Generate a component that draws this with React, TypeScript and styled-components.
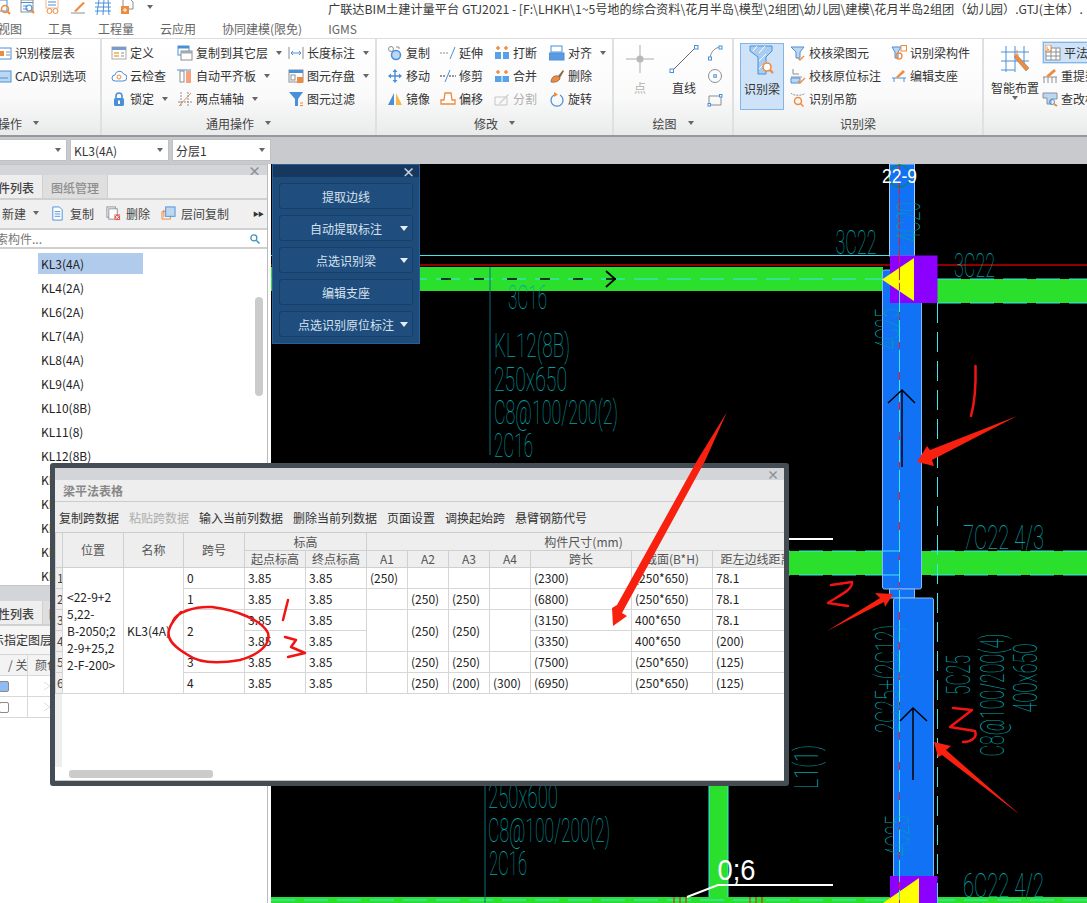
import React from 'react';
import styled, { createGlobalStyle } from 'styled-components';

const Global = createGlobalStyle`
  html, body { margin: 0; padding: 0; background: #c9cacd; }
  * { box-sizing: border-box; }
`;

const FONT = `"Noto Sans CJK SC", "Open Sans", sans-serif`;
const B = '#4a90d9';
const LB = '#bcd7f2';
const O = '#f08a3c';
const G = '#8a8f96';

const Page = styled.div`
  position: relative; width: 1087px; height: 903px; overflow: hidden;
  background: #c9cacd; font: 12px/17px ${FONT}; color: #333;
`;
const TitleRow = styled.div`
  display: flex; align-items: flex-start; height: 20px; background: #fff; overflow: hidden; white-space: nowrap;
`;
const Quick = styled.div`
  display: flex; align-items: center; gap: 9px; width: 333px; flex: none; margin-left: -5px; height: 16px; margin-top: -1px;
`;
const Title = styled.div`font-size: 12.2px; line-height: 18px; color: #3a3a3a;`;
const MenuRow = styled.div`
  display: flex; gap: 26px; height: 18px; background: #fff; margin-left: -2px; color: #666; line-height: 18px; white-space: nowrap;
`;
const Ribbon = styled.div`
  display: flex; height: 99px; background: linear-gradient(#fff 0, #fafafa 60%, #e9eaea 100%);
  border-top: 1px solid #dcdcdc; border-bottom: 2px solid #97989b; overflow: hidden;
`;
const Group = styled.div<{ $w: number }>`
  width: ${p => p.$w}px; flex: none; display: flex; flex-direction: column;
  border-right: 2px solid #dfe0e1; margin: 0;
`;
const GroupBody = styled.div<{ $pl: number }>`
  height: 73px; display: flex; padding: 2px 0 0 ${p => p.$pl}px;
`;
const GroupLabel = styled.div<{ $left?: boolean }>`
  height: 22px; display: flex; align-items: center; gap: 6px; color: #444; white-space: nowrap;
  justify-content: ${p => (p.$left ? 'flex-start' : 'center')};
  margin-left: ${p => (p.$left ? '-2px' : '0')};
`;
const Column = styled.div<{ $w?: number; $ml?: number }>`
  display: flex; flex-direction: column; flex: none; width: ${p => (p.$w ? `${p.$w}px` : 'auto')};
  margin-left: ${p => p.$ml ?? 0}px;
`;
const Tool = styled.div<{ $off?: boolean; $on?: boolean }>`
  display: flex; align-items: center; gap: 3px; height: 23px; white-space: nowrap;
  color: ${p => (p.$off ? '#b0b0b0' : '#333')};
  background: ${p => (p.$on ? '#cfe3f8' : 'none')};
  outline: ${p => (p.$on ? '1px solid #86b4e4' : 'none')};
  outline-offset: -2px; padding-left: ${p => (p.$on ? 3 : 0)}px;
`;
const IconBox = styled.span`
  width: 16px; height: 16px; flex: none; display: flex; align-items: center; justify-content: center;
`;
const Caret = styled.span<{ $c?: string; $ml?: number }>`
  width: 0; height: 0; flex: none; margin-left: ${p => p.$ml ?? 5}px;
  border-left: 3.5px solid transparent; border-right: 3.5px solid transparent; border-top: 4px solid ${p => p.$c ?? '#666'};
`;
const BigTool = styled.div<{ $w: number; $off?: boolean; $on?: boolean }>`
  width: ${p => p.$w}px; height: 67px; flex: none; display: flex; flex-direction: column; align-items: center;
  padding-top: ${p => (p.$on ? 1 : 3)}px; color: ${p => (p.$off ? '#b4b4b4' : '#333')};
  background: ${p => (p.$on ? '#cfe3f8' : 'none')}; border: ${p => (p.$on ? '1px solid #86b4e4' : 'none')};
  margin-top: ${p => (p.$on ? '2px' : '0')}; white-space: nowrap;
`;
const BigLabel = styled.span`margin-top: 5px;`;
const ComboBar = styled.div`
  display: flex; gap: 3px; height: 27px; padding-top: 2px; background: #c9cacd; margin-left: -20px;
`;
const Combo = styled.div<{ $w: number }>`
  width: ${p => p.$w}px; height: 22px; background: #fff; border: 1px solid #c0c1c4; display: flex; align-items: center;
  justify-content: space-between; padding: 0 5px 0 3px; color: #333;
`;
const Main = styled.div`display: flex; height: 739px; background: #000;`;
const Side = styled.div`
  width: 268px; flex: none; display: flex; flex-direction: column; background: #fff; border-right: 1px solid #bbb; overflow: hidden;
`;
const Gap = styled.div`width: 3px; flex: none; background: #fff;`;
const CanvasWrap = styled.div`flex: 1; position: relative; background: #000;`;
const Canvas = styled.svg`display: block; width: 816px; height: 739px;`;
const PanelHead = styled.div<{ $h: number }>`
  height: ${p => p.$h}px; flex: none; background: #d4d5d8; display: flex; align-items: center; justify-content: flex-end;
  padding-right: 6px; color: #8a8f96; font-weight: 700; font-size: 13px; border-top: 1px solid #c3c4c7;
`;
const TabBar = styled.div`display: flex; height: 25px; flex: none; background: #f0f0f0; border-bottom: 2px solid #d0d0d0;`;
const TabOn = styled.div`
  width: 43px; display: flex; justify-content: flex-end; align-items: center; overflow: hidden; background: #eee; color: #444;
  font-weight: 500; font-size: 12px; white-space: nowrap; border-right: 1px solid #d0d0d0; padding: 2px 8px 0 0;
`;
const TabOff = styled.div<{ $w?: number }>`
  width: ${p => p.$w ?? 65}px; display: flex; justify-content: center; align-items: center; background: #dfdfdf; color: #8e8e8e;
  font-weight: 500; border-right: 1px solid #cfcfcf; white-space: nowrap; padding-top: 2px;
`;
const SideBar = styled.div`
  height: 30px; flex: none; background: #f0f0f0; display: flex; align-items: center; padding: 0 0 2px 2px; border-bottom: 2px solid #d0d0d0; white-space: nowrap;
`;
const SideItem = styled.span<{ $ml?: number }>`
  display: flex; align-items: center; gap: 5px; margin-left: ${p => p.$ml ?? 0}px; color: #444;
`;
const More = styled.span`margin-left: auto; margin-right: 4px; font-size: 6px; color: #333; letter-spacing: -1px;`;
const Search = styled.div`
  height: 19px; flex: none; display: flex; align-items: center; justify-content: space-between; padding-right: 6px;
  border-bottom: 2px solid #d0d0d0; color: #777;
`;
const SearchText = styled.span`margin-left: -16px;`;
const List = styled.div`position: relative; height: 336px; flex: none; padding-top: 4px; overflow: hidden;`;
const ListRow = styled.div<{ $on?: boolean }>`
  width: 105px; height: 21px; margin: 0 0 3px 38px; padding-left: 3px; line-height: 21px; color: #222;
  background: ${p => (p.$on ? '#b1cbec' : 'none')};
`;
const Thumb = styled.div`position: absolute; left: 255px; top: 48px; width: 8px; height: 99px; background: #cbcbcb; border-radius: 4px;`;
const LayerNote = styled.div`
  height: 29px; flex: none; padding-left: 0; line-height: 28px; margin-left: -20px; background: #f5f5f5; border-bottom: 1px solid #d5d5d5; white-space: nowrap;
`;
const LayerRow = styled.div<{ $head?: boolean }>`
  display: grid; grid-template-columns: 28px 40px; height: 21px; flex: none; border-bottom: 1px solid #d8d8d8;
  background: ${p => (p.$head ? '#f3f3f3' : '#fff')}; line-height: 20px; color: #555;
`;
const LayerCell = styled.div`border-right: 1px solid #d8d8d8; display: flex; align-items: center; padding-left: 0; height: 20px;`;
const LayerHead = styled.div`padding-left: 8px; white-space: nowrap; border-right: 1px solid #d8d8d8;`;
const LayerColor = styled.div`padding-left: 7px; white-space: nowrap;`;
const Check = styled.span<{ $on?: boolean }>`
  width: 10px; height: 11px; margin-left: -1px; border: 1px solid #8a8a8a; border-radius: 2px; background: ${p => (p.$on ? '#8fbdf3' : '#fff')};
`;
const Tri = styled.span`
  margin-left: 16px; width: 0; height: 0; border-left: 6px solid #fff; position: relative;
  border-top: 4px solid transparent; border-bottom: 4px solid transparent; filter: drop-shadow(0 0 .6px #666);
`;

const FloatPanel = styled.div`
  position: absolute; left: 1px; top: 0; width: 148px; height: 180px; background: #1d4b7a; border: 1px solid #2a5f96;
  display: flex; flex-direction: column; gap: 6px; z-index: 2;
`;
const FloatHead = styled.div`
  height: 12px; background: #16385f; display: flex; justify-content: flex-end; align-items: center; color: #c6d3e0; font-size: 13px;
  font-weight: 700; padding-right: 4px;
`;
const FloatBtn = styled.div`
  position: relative; margin: 0 6px; height: 26px; background: #1f4e7e; border: 1px solid #173e66; border-radius: 3px;
  display: flex; align-items: center; justify-content: center; color: #d7e2ee; white-space: nowrap;
`;
const FloatCaret = styled(Caret)`position: absolute; right: 4px; top: 10px; margin: 0; border-left-width: 4px; border-right-width: 4px; border-top-width: 5px;`;

const Dialog = styled.div`
  position: absolute; left: 50px; top: 463px; width: 739px; height: 323px; border: 5px solid #454d54; border-radius: 3px;
  background: #fff; display: flex; flex-direction: column; z-index: 3; overflow: hidden;
`;
const DlgHead = styled.div`
  height: 12px; flex: none; background: #d4d5d8; display: flex; justify-content: flex-end; align-items: center; padding-right: 5px;
  color: #8a8f96; font-weight: 700; font-size: 12px;
`;
const DlgCaption = styled.div`
  height: 22px; flex: none; background: #eee; border-bottom: 1px solid #ccc; padding-left: 8px; line-height: 22px; color: #888; font-weight: 700;
`;
const DlgBar = styled.div`
  height: 31px; flex: none; display: flex; align-items: center; gap: 10px; padding-left: 4px; background: #eee; border-bottom: 1px solid #ccc;
`;
const DlgBtn = styled.span<{ $off?: boolean }>`color: ${p => (p.$off ? '#adadad' : '#333')}; white-space: nowrap;`;
const TableWrap = styled.div`flex: none; overflow: hidden; height: 161px;`;
const Table = styled.table`
  border-collapse: collapse; table-layout: fixed; width: 745px; font-size: 12px; line-height: 15px;
`;
const Th = styled.th`
  height: 17px; padding: 0; background: #eee; border: 1px solid #cfcfcf; font-weight: 400; color: #555;
  white-space: nowrap; overflow: hidden; text-align: center; border-top: 0; line-height: 15px;
`;
const Td = styled.td`
  height: 21px; padding: 0 0 0 3px; border: 1px solid #d6d6d6; color: #222; white-space: nowrap; overflow: hidden;
`;
const Idx = styled.td`
  height: 21px; padding: 0 0 0 1px; background: #eee; border: 1px solid #cfcfcf; color: #444; overflow: hidden;
`;
const Pos = styled(Td)`white-space: nowrap; padding-left: 4px; line-height: 17px;`;
const DlgFill = styled.div`flex: 1; display: flex;`;
const Strip = styled.div`width: 7px; background: #eee;`;
const DlgScroll = styled.div`height: 14px; flex: none; padding: 3px 0 0 14px; border-bottom: 1px solid #c8c8c8;`;
const DlgThumb = styled.div`width: 144px; height: 8px; border-radius: 3px; background: #cbcbcb;`;
const Marks = styled.svg`position: absolute; left: 0; top: 0; width: 1087px; height: 903px; z-index: 4; pointer-events: none;`;
const CadLabel = styled.text`
  font-family: Roboto, "Liberation Sans", sans-serif; font-weight: 100; font-size: 33px; fill: #00a0a6;
`;
const WhiteLabel = styled.text`font-family: "Liberation Sans", sans-serif; fill: #fff;`;

const Ic = ({ s = 16, children }: { s?: number; children: React.ReactNode }) => (
  <svg width={s} height={s} viewBox="0 0 16 16" fill="none">{children}</svg>
);

const icons: Record<string, React.ReactNode> = {
  floor: <><rect x="1" y="3" width="14" height="11" fill="#fff" stroke={B} /><rect x="3" y="6" width="5" height="5" fill={O} /><path d="M10 7h4M10 10h4" stroke={G} /></>,
  cad: <><rect x="1" y="3" width="14" height="11" fill={LB} stroke={B} /><path d="M4 10h8" stroke={B} /></>,
  define: <><rect x="1" y="2" width="14" height="12" fill="#fff" stroke="#aaa" /><rect x="1" y="2" width="14" height="3" fill="#7a9ccc" /><rect x="3" y="7" width="5" height="2" fill="#f3c27a" /><rect x="3" y="10" width="5" height="2" fill="#f3c27a" /><path d="M10 8h3M10 11h3" stroke={G} /></>,
  cloud: <><path d="M4 13a3 3 0 0 1 0-6 4.5 4.5 0 0 1 8.6-1A3.5 3.5 0 0 1 12 13Z" fill="#fff" stroke={B} /><circle cx="8" cy="9" r="2" stroke={O} /></>,
  lock: <><path d="M5 7V5a3 3 0 0 1 6 0v2" stroke={B} strokeWidth="1.6" /><rect x="3" y="7" width="10" height="8" rx="1.5" fill={B} /><rect x="7" y="9.5" width="2" height="3.5" fill="#fff" /></>,
  copyLayer: <><rect x="1" y="1" width="11" height="9" fill="#fff" stroke={B} /><rect x="1" y="1" width="11" height="2.5" fill={B} /><rect x="4" y="6" width="11" height="9" fill="#fff" stroke={G} /><rect x="4" y="6" width="11" height="2.5" fill="#a5a9ad" /></>,
  alignBar: <><path d="M0 2h14" stroke={B} /><rect x="3" y="3" width="4" height="11" fill="#fff" stroke={G} /><rect x="9" y="3" width="5" height="12" fill="#f6a27a" /></>,
  twoPt: <><path d="M1 11h14M4 1v14" stroke={G} strokeDasharray="2 1" /><path d="M2 15 14 2" stroke={O} /><path d="M11 1v14" stroke={G} strokeDasharray="2 1" /></>,
  dim: <><path d="M1 2v12M15 2v12" stroke={G} /><path d="M3 8h10M3 8l2-2M3 8l2 2M13 8l-2-2M13 8l-2 2" stroke={B} /></>,
  save: <><rect x="1" y="2" width="14" height="12" fill="#fff" stroke={G} /><rect x="1" y="2" width="14" height="3" fill={B} /><rect x="3" y="7" width="4" height="5" stroke={G} /><rect x="9" y="9" width="6" height="6" fill={O} /></>,
  filter: <><path d="M1 1h14L10 8v7H7V8Z" fill={B} /><path d="M12 12h3M12 14.500h3" stroke={O} /></>,
  copy: <><circle cx="4" cy="4" r="2.500" stroke={G} /><circle cx="9" cy="10" r="4.500" fill={LB} stroke={B} strokeWidth="1.5" /><path d="M9 2h3v2" stroke={G} /></>,
  move: <path d="M8 1 5.500 4h5ZM8 15l-2.500-3h5ZM1 8l3-2.500v5ZM15 8l-3-2.500v5ZM4 7.300h8v1.400H4ZM7.300 4h1.400v8H7.300Z" fill={B} />,
  mirror: <><path d="M7 2v12H1Z" fill={B} /><path d="M9 2v12h6Z" fill="#f5b94a" /></>,
  extend: <><path d="M0 8h9" stroke={G} strokeDasharray="2 1" /><path d="M10 14 15 2" stroke={B} /></>,
  trim: <><path d="M5 14 10 2" stroke={B} /><path d="M0 8h5M9 8h7" stroke="#333" strokeDasharray="2 1" /></>,
  offset: <path d="M1 13V9h3l1-7h6l1 7h3v4Z" fill="#fff" stroke={O} strokeWidth="1.300" />,
  cut: <><rect x="1" y="7" width="6" height="7" fill="#5aa2e6" /><rect x="9" y="7" width="6" height="7" fill="#5aa2e6" /><path d="M4 1v4M2 3h4M12 1v4M10 3h4" stroke={O} strokeWidth="1.500" /></>,
  merge: <><rect x="1" y="8" width="14" height="6" fill="#5aa2e6" /><path d="M8 8v6" stroke="#fff" /><path d="M4 2v4M2 4h4M12 2v4M10 4h4" stroke={O} strokeWidth="1.500" /></>,
  split: <><path d="M1 6h12v8H1Z" stroke="#c6c6c6" /><path d="M5 12 14 3l1 1-9 9Z" fill="#d0d0d0" /></>,
  alignObj: <><rect x="2" y="1" width="11" height="6" fill="#fff" stroke={B} /><rect x="0" y="8" width="15" height="7" fill="#5a9be0" stroke={B} /></>,
  del: <><path d="M9 8 14 2l1 1-4 7Z" fill="#8a6a3a" /><path d="M2 14c0-4 3-7 7-6l2 2c0 3-5 5-9 4Z" fill={O} stroke="#555" strokeWidth=".6" /></>,
  rotate: <><path d="M11 4a6 6 0 1 1-6 0" stroke={B} strokeWidth="1.300" /><path d="M5 1v5l4-2.500Z" fill={O} /></>,
  arc: <><path d="M3 14C3 8 7 3 13 2" stroke={G} /><rect x="1.500" y="12" width="3" height="3" fill="#fff" stroke={B} /><rect x="12" y="1" width="3" height="3" fill="#fff" stroke={B} /></>,
  circle: <><circle cx="8" cy="8" r="6.500" stroke={G} /><rect x="6.800" y="6.800" width="2.500" height="2.500" stroke={B} /></>,
  rect: <><path d="M2 5h12v9H2Z" stroke={G} /><rect x="1" y="12.500" width="2.500" height="2.500" fill="#fff" stroke={B} /><rect x="12.500" y="3.500" width="2.500" height="2.500" fill="#fff" stroke={B} /></>,
  checkBeam: <><path d="M1 2h13l-4 5v6H6V7Z" fill={LB} stroke={B} /><path d="M8 13l2 2 4-4" stroke={O} strokeWidth="1.300" /></>,
  checkMark: <><path d="M3 1v5h6M1 9h11" stroke={G} /><path d="M1 10h9v5H1Z" fill={LB} stroke={B} /><path d="M8 13l2 2 5-5" stroke={O} strokeWidth="1.300" /></>,
  hang: <><path d="M1 2c1 3 13 3 14 0" stroke={G} strokeDasharray="2 1" /><circle cx="8" cy="10" r="3.500" stroke={O} strokeWidth="1.500" /><path d="m10.500 12.500 3 3" stroke={O} strokeWidth="1.500" /></>,
  idPart: <><path d="M1 2h9L7 7v6H4V7Z" fill={LB} stroke={B} /><rect x="10" y="0.500" width="5.500" height="5.500" fill="#fff" stroke={O} /><circle cx="8" cy="11" r="3" stroke={O} strokeWidth="1.300" /></>,
  editSup: <><path d="M1 10h14M3 14v-4M13 14v-4" stroke={B} /><path d="M5 9l7-7 2 2-7 6Z" fill={O} /></>,
  table: <><rect x="1" y="3" width="14" height="12" fill="#fff" stroke={G} /><path d="M1 7h14M1 11h14M6 3v12M11 3v12" stroke={G} /><rect x="0" y="0" width="6" height="6" fill="#fff" stroke={O} /><path d="M2 1.500v3h2" stroke={O} /></>,
  refetch: <><path d="M1 9h14M2 15V9M6 15V9M10 15V9M14 15V9" stroke={G} /><path d="M4 8l8-7 2 2-7 6Z" fill={O} /></>,
  check2: <><path d="M1 2h14v6H9v5H5V7H1Z" fill={LB} stroke={G} /><circle cx="10" cy="11" r="2.500" stroke={B} /><path d="m12 13 3 2" stroke={O} strokeWidth="2" /></>,
  paper: <><path d="M3 1h7l3 3v11H3Z" fill="#fff" stroke={B} /><path d="M5 6h6M5 8.500h6M5 11h6" stroke={B} /></>,
  rm: <><rect x="1" y="1" width="9" height="11" fill="#fff" stroke={G} /><rect x="3" y="3" width="9" height="11" fill="#fff" stroke={G} /><rect x="9" y="9" width="6" height="6" fill="#e05a50" /><path d="m10 10 4 4m0-4-4 4" stroke="#fff" /></>,
  layer: <><path d="M1 14V6h9v8Z" stroke={O} /><path d="M3 12V4" stroke={O} /><rect x="5" y="1" width="10" height="10" fill={LB} stroke={B} /></>,
  mag: <><circle cx="6.500" cy="6.500" r="4" stroke="#3b8fc4" strokeWidth="1.600" /><path d="m10 10 4 4" stroke="#3b8fc4" strokeWidth="2" /></>,
  qa1: <><rect x="1" y="1" width="11" height="11" fill="#fff" stroke={B} /><circle cx="10" cy="10" r="3.500" stroke={O} strokeWidth="1.500" /><path d="m12.500 12.500 2.500 2.500" stroke={O} strokeWidth="2" /></>,
  qa2: <><rect x="1" y="1" width="12" height="12" fill="#fff" stroke={G} /><path d="M1 3.500h12M3 7h5M3 10h5" stroke={B} /><circle cx="9" cy="9" r="3" stroke={B} strokeWidth="1.200" /><path d="m11 11 3 3" stroke={O} strokeWidth="2" /></>,
  qa3: <><rect x="1" y="0" width="12" height="9" fill="#fff" stroke="#f0b890" /><path d="M3 3h8M3 6h8" stroke={B} /><circle cx="4.500" cy="12" r="2.500" stroke={O} /><circle cx="10.500" cy="12" r="2.500" stroke={O} /></>,
  qa4: <><path d="M1 14h14" stroke={G} /><path d="M4 12 13 3l2 1-9 9Z" fill={O} /></>,
  qa5: <><path d="M0 4h16M0 8h16M0 12h16M4 0l-2 16M9 0 8 16M13 0l1 16" stroke={B} /></>,
  qa6: <><path d="M3 0h7l3 3v7H3Z" fill="#fff" stroke={G} /><rect x="1" y="7" width="8" height="8" fill={O} /><path d="M3 11h4M5 9v4" stroke="#fff" /></>,
};

const Icon = ({ n }: { n: string }) => <IconBox><Ic>{icons[n]}</Ic></IconBox>;

const T = ({ n, t, c, off, on }: { n: string; t: string; c?: boolean; off?: boolean; on?: boolean }) => (
  <Tool $off={off} $on={on}><Icon n={n} />{t}{c && <Caret />}</Tool>
);

const PointIcon = () => (
  <svg width="30" height="30" viewBox="0 0 30 30"><path d="M1 15h28M15 1v28" stroke="#c8c8c8" strokeWidth="1.500" /><circle cx="15" cy="15" r="3.500" fill="#b8b8b8" /></svg>
);
const LineIcon = () => (
  <svg width="30" height="30" viewBox="0 0 30 30" fill="none"><path d="M3 27 27 3" stroke="#666" /><rect x="1" y="25" width="3.500" height="3.500" fill="#fff" stroke={B} /><rect x="25.500" y="1.500" width="3.500" height="3.500" fill="#fff" stroke={B} /></svg>
);
const BeamIcon = () => (
  <svg width="30" height="30" viewBox="0 0 30 30" fill="none"><path d="M3 1h22v5l-6 6v17H11V12L3 6Z" fill="#a9cdf0" stroke={B} /><path d="M6 6l4-5M12 8l6-7M12 16l7-7M12 24l7-7" stroke="#fff" /><circle cx="20" cy="22" r="4" fill="#fff" stroke={O} strokeWidth="1.600" /><path d="m23 25 3 3" stroke={O} strokeWidth="2.200" /></svg>
);
const SmartIcon = () => (
  <svg width="30" height="30" viewBox="0 0 30 30" fill="none"><path d="M6 2v26M15 2v26M24 2v20M1 8h28M1 17h28M1 26h14" stroke={B} /><path d="M14 13 26 27l3-3L17 11Z" fill={O} stroke="#777" strokeWidth=".5" /><path d="M19 11h-5M17 6v5" stroke={O} /></svg>
);

const Cad = ({ cx, cy, len, rot, children }: { cx: number; cy: number; len: number; rot?: boolean; children: string }) => (
  <CadLabel x={cx} y={cy + 12} textAnchor="middle" textLength={len} lengthAdjust="spacingAndGlyphs" transform={rot ? `rotate(-90 ${cx} ${cy})` : undefined}>{children}</CadLabel>
);

const names = ['KL3(4A)', 'KL4(2A)', 'KL6(2A)', 'KL7(4A)', 'KL8(4A)', 'KL9(4A)', 'KL10(8B)', 'KL11(8)', 'KL12(8B)', 'KL13(8B)', 'KL14(2)', 'KL15(2)', 'KL16(2)', 'KL17(2)'];
const GREEN = '#2be02d';
const BLUE = '#1272f5';
const EDGE = '#8ab8f0';
const CY = '#3fe6f0';

const App = () => (
  <Page>
    <Global />
    <TitleRow>
      <Quick>
        {['qa1', 'qa2', 'qa3', 'qa4', 'qa5', 'qa6'].map(q => <Ic key={q}>{icons[q]}</Ic>)}
        <Caret $ml={2} />
      </Quick>
      <Title>广联达BIM土建计量平台 GTJ2021 - [F:\LHKH\1~5号地的综合资料\花月半岛\模型\2组团\幼儿园\建模\花月半岛2组团（幼儿园）.GTJ(主体）.</Title>
    </TitleRow>
    <MenuRow>
      <span>视图</span><span>工具</span><span>工程量</span><span>云应用</span><span>协同建模(限免)</span><span>IGMS</span>
    </MenuRow>
    <Ribbon>
      <Group $w={102}>
        <GroupBody $pl={0}>
          <Column $ml={-4}>
            <T n="floor" t="识别楼层表" />
            <T n="cad" t="CAD识别选项" />
          </Column>
        </GroupBody>
        <GroupLabel $left>操作<Caret /></GroupLabel>
      </Group>
      <Group $w={275}>
        <GroupBody $pl={9}>
          <Column $w={66}>
            <T n="define" t="定义" />
            <T n="cloud" t="云检查" />
            <T n="lock" t="锁定" c />
          </Column>
          <Column $w={111}>
            <T n="copyLayer" t="复制到其它层" c />
            <T n="alignBar" t="自动平齐板" c />
            <T n="twoPt" t="两点辅轴" c />
          </Column>
          <Column>
            <T n="dim" t="长度标注" c />
            <T n="save" t="图元存盘" c />
            <T n="filter" t="图元过滤" />
          </Column>
        </GroupBody>
        <GroupLabel>通用操作<Caret /></GroupLabel>
      </Group>
      <Group $w={237}>
        <GroupBody $pl={10}>
          <Column $w={53}>
            <T n="copy" t="复制" />
            <T n="move" t="移动" />
            <T n="mirror" t="镜像" />
          </Column>
          <Column $w={54}>
            <T n="extend" t="延伸" />
            <T n="trim" t="修剪" />
            <T n="offset" t="偏移" />
          </Column>
          <Column $w={55}>
            <T n="cut" t="打断" />
            <T n="merge" t="合并" />
            <T n="split" t="分割" off />
          </Column>
          <Column>
            <T n="alignObj" t="对齐" c />
            <T n="del" t="删除" />
            <T n="rotate" t="旋转" />
          </Column>
        </GroupBody>
        <GroupLabel>修改<Caret /></GroupLabel>
      </Group>
      <Group $w={120}>
        <GroupBody $pl={4}>
          <BigTool $w={44} $off><PointIcon /><BigLabel>点</BigLabel></BigTool>
          <BigTool $w={44}><LineIcon /><BigLabel>直线</BigLabel></BigTool>
          <Column $ml={1}>
            <Tool><Icon n="arc" /></Tool>
            <Tool><Icon n="circle" /></Tool>
            <Tool><Icon n="rect" /></Tool>
          </Column>
        </GroupBody>
        <GroupLabel>绘图<Caret /></GroupLabel>
      </Group>
      <Group $w={250}>
        <GroupBody $pl={6}>
          <BigTool $w={44} $on><BeamIcon /><BigLabel>识别梁</BigLabel></BigTool>
          <Column $w={101} $ml={6}>
            <T n="checkBeam" t="校核梁图元" />
            <T n="checkMark" t="校核原位标注" />
            <T n="hang" t="识别吊筋" />
          </Column>
          <Column>
            <T n="idPart" t="识别梁构件" />
            <T n="editSup" t="编辑支座" />
          </Column>
        </GroupBody>
        <GroupLabel>识别梁</GroupLabel>
      </Group>
      <Group $w={110}>
        <GroupBody $pl={7}>
          <BigTool $w={48}><SmartIcon /><BigLabel>智能布置</BigLabel><Caret $ml={0} /></BigTool>
          <Column $w={60} $ml={3}>
            <T n="table" t="平法表格" on />
            <T n="refetch" t="重提梁跨" />
            <T n="check2" t="查改标注" />
          </Column>
        </GroupBody>
      </Group>
    </Ribbon>
    <ComboBar>
      <Combo $w={87}><span /><Caret $ml={0} /></Combo>
      <Combo $w={99}>KL3(4A)<Caret $ml={0} /></Combo>
      <Combo $w={99}>分层1<Caret $ml={0} /></Combo>
    </ComboBar>
    <Main>
      <Side>
        <PanelHead $h={11}>×</PanelHead>
        <TabBar><TabOn>构件列表</TabOn><TabOff>图纸管理</TabOff></TabBar>
        <SideBar>
          <SideItem>新建<Caret $ml={2} /></SideItem>
          <SideItem $ml={11}><Ic s={15}>{icons.paper}</Ic>复制</SideItem>
          <SideItem $ml={12}><Ic s={15}>{icons.rm}</Ic>删除</SideItem>
          <SideItem $ml={11}><Ic s={15}>{icons.layer}</Ic>层间复制</SideItem>
          <More>▶▶</More>
        </SideBar>
        <Search><SearchText>搜索构件...</SearchText><Ic s={12}>{icons.mag}</Ic></Search>
        <List>
          {names.map((n, i) => <ListRow key={n} $on={i === 0}>{n}</ListRow>)}
          <Thumb />
        </List>
        <PanelHead $h={16} />
        <TabBar><TabOn>属性列表</TabOn><TabOff $w={60}>图层管理</TabOff></TabBar>
        <LayerNote>显示指定图层</LayerNote>
        <LayerRow $head><LayerHead>/ 关</LayerHead><LayerColor>颜色</LayerColor></LayerRow>
        <LayerRow><LayerCell><Check $on /></LayerCell><LayerCell><Tri /></LayerCell></LayerRow>
        <LayerRow><LayerCell><Check /></LayerCell><LayerCell><Tri /></LayerCell></LayerRow>
      </Side>
      <Gap />
      <CanvasWrap>
        <Canvas viewBox="271 164 816 739">
          <rect x="271" y="267" width="612" height="24" fill={GREEN} />
          <rect x="937" y="279" width="150" height="24" fill={GREEN} />
          <rect x="271" y="551" width="816" height="24" fill={GREEN} />
          <rect x="709" y="780" width="19" height="120" fill={GREEN} />
          <rect x="271" y="897" width="816" height="6" fill={GREEN} />
          <path d="M709 780v117M728 780v117" stroke={CY} />
          <path d="M271 279h612M937 279h150M937 303h150M271 551h816M271 575h816M271 900h816" stroke={CY} strokeDasharray="24 9" />
          <path d="M271 279h345" stroke="#000" strokeDasharray="10 23" strokeDashoffset="-5" strokeWidth="1.500" />
          <path d="M606 271l9 8-9 8" stroke="#000" strokeWidth="1.800" fill="none" />
          <path d="M271 255.500h618" stroke={CY} />
          <path d="M271 265h816" stroke="#8b0000" strokeWidth="2" />
          <rect x="889.500" y="164" width="25" height="92" fill={BLUE} stroke="#9cd0f5" />
          <rect x="882.500" y="270" width="39" height="319" rx="2" fill={BLUE} stroke={EDGE} />
          <rect x="889.500" y="589" width="25" height="9" fill={BLUE} stroke={EDGE} />
          <rect x="893.500" y="598" width="40" height="279" rx="2" fill={BLUE} stroke={EDGE} />
          <rect x="890" y="255.500" width="47.500" height="47.500" fill="#8b00ff" />
          <path d="M914 258v43l-32-21.500Z" fill="#ff0" />
          <rect x="890" y="876" width="47.500" height="30" fill="#8b00ff" />
          <path d="M919 878v25h-36Z" fill="#ff0" />
          <path d="M899.500 164v739" stroke="#e02020" strokeDasharray="14 3" />
          <path d="M899.500 290v610" stroke={CY} strokeDasharray="22 8" />
          <path d="M937.500 303v600" stroke={CY} strokeDasharray="20 9" />
          <path d="M883 551h16M883 575h16" stroke={CY} />
          <path d="M902 467V390M888 403l14-13 13 13" stroke="#000" strokeWidth="1.500" fill="none" />
          <path d="M913 780V708M900 721l13-13 14 13" stroke="#000" strokeWidth="1.500" fill="none" />
          <circle cx="899.500" cy="176" r="11" fill="none" stroke="#0a8a2a" />
          <WhiteLabel x="899.500" y="183" fontSize="20" textAnchor="middle" textLength="35" lengthAdjust="spacingAndGlyphs">22-9</WhiteLabel>
          <path d="M490 267v188M485 786v117" stroke="#0a7078" />
          <Cad cx={527.500} cy={297} len={39}>3C16</Cad>
          <Cad cx={532} cy={345} len={76}>KL12(8B)</Cad>
          <Cad cx={530.500} cy={379} len={73}>250x650</Cad>
          <Cad cx={556} cy={412} len={124}>C8@100/200(2)</Cad>
          <Cad cx={513.500} cy={445} len={39}>2C16</Cad>
          <Cad cx={856} cy={242} len={41}>3C22</Cad>
          <Cad cx={974.500} cy={265} len={41}>3C22</Cad>
          <Cad cx={1003.500} cy={537} len={81}>7C22 4/3</Cad>
          <Cad cx={1003.500} cy={885} len={81}>6C22 4/2</Cad>
          <Cad cx={908} cy={222} len={40} rot>4C20</Cad>
          <Cad cx={887} cy={329} len={41} rot>4C25</Cad>
          <Cad cx={887} cy={679} len={108} rot>2C25+(2C12)</Cad>
          <Cad cx={897} cy={836} len={41} rot>4C25</Cad>
          <Cad cx={958} cy={675} len={40} rot>5C25</Cad>
          <Cad cx={991.500} cy={695} len={123} rot>C8@100/200(4)</Cad>
          <Cad cx={1025} cy={678} len={69} rot>400x650</Cad>
          <Cad cx={806} cy={767} len={44} rot>L1(1)</Cad>
          <Cad cx={523} cy={796} len={70}>250x600</Cad>
          <Cad cx={549} cy={830} len={122}>C8@100/200(2)</Cad>
          <Cad cx={508} cy={863} len={38}>2C16</Cad>
          <path d="M789 539h44" stroke="#fff" strokeWidth="2" />
          <path d="M687 897l31-12h115" stroke="#fff" strokeWidth="2" fill="none" />
          <WhiteLabel x="736.500" y="880" fontSize="30" textAnchor="middle" textLength="38" lengthAdjust="spacingAndGlyphs">0;6</WhiteLabel>
          <path d="M674 897v6M680 897v6M686 897v6M750 897v6M756 897v6M762 897v6" stroke="#f00" />
        </Canvas>
        <FloatPanel>
          <FloatHead>×</FloatHead>
          <FloatBtn>提取边线</FloatBtn>
          <FloatBtn>自动提取标注<FloatCaret $c="#e8eef5" /></FloatBtn>
          <FloatBtn>点选识别梁<FloatCaret $c="#e8eef5" /></FloatBtn>
          <FloatBtn>编辑支座</FloatBtn>
          <FloatBtn>点选识别原位标注<FloatCaret $c="#e8eef5" /></FloatBtn>
        </FloatPanel>
      </CanvasWrap>
    </Main>
    <Dialog>
      <DlgHead>×</DlgHead>
      <DlgCaption>梁平法表格</DlgCaption>
      <DlgBar>
        <DlgBtn>复制跨数据</DlgBtn>
        <DlgBtn $off>粘贴跨数据</DlgBtn>
        <DlgBtn>输入当前列数据</DlgBtn>
        <DlgBtn>删除当前列数据</DlgBtn>
        <DlgBtn>页面设置</DlgBtn>
        <DlgBtn>调换起始跨</DlgBtn>
        <DlgBtn>悬臂钢筋代号</DlgBtn>
      </DlgBar>
      <TableWrap>
        <Table>
          <colgroup>
            {[7, 61, 60, 61, 61, 61, 41, 41, 41, 41, 101, 81, 88].map((w, i) => <col key={i} style={{ width: w }} />)}
          </colgroup>
          <thead>
            <tr>
              <Th rowSpan={2} />
              <Th rowSpan={2}>位置</Th>
              <Th rowSpan={2}>名称</Th>
              <Th rowSpan={2}>跨号</Th>
              <Th colSpan={2}>标高</Th>
              <Th colSpan={7}>构件尺寸(mm)</Th>
            </tr>
            <tr>
              <Th>起点标高</Th><Th>终点标高</Th><Th>A1</Th><Th>A2</Th><Th>A3</Th><Th>A4</Th><Th>跨长</Th><Th>截面(B*H)</Th><Th>距左边线距离</Th>
            </tr>
          </thead>
          <tbody>
            <tr>
              <Idx>1</Idx>
              <Pos rowSpan={6}>&lt;22-9+2<br />5,22-<br />B-2050;2<br />2-9+25,2<br />2-F-200&gt;</Pos>
              <Td rowSpan={6}>KL3(4A)</Td>
              <Td>0</Td><Td>3.85</Td><Td>3.85</Td><Td>(250)</Td><Td /><Td /><Td /><Td>(2300)</Td><Td>(250*650)</Td><Td>78.1</Td>
            </tr>
            <tr>
              <Idx>2</Idx><Td>1</Td><Td>3.85</Td><Td>3.85</Td><Td /><Td>(250)</Td><Td>(250)</Td><Td /><Td>(6800)</Td><Td>(250*650)</Td><Td>78.1</Td>
            </tr>
            <tr>
              <Idx>3</Idx><Td rowSpan={2}>2</Td><Td>3.85</Td><Td>3.85</Td><Td rowSpan={2} /><Td rowSpan={2}>(250)</Td><Td rowSpan={2}>(250)</Td><Td rowSpan={2} /><Td>(3150)</Td><Td>400*650</Td><Td>78.1</Td>
            </tr>
            <tr>
              <Idx>4</Idx><Td>3.85</Td><Td>3.85</Td><Td>(3350)</Td><Td>400*650</Td><Td>(200)</Td>
            </tr>
            <tr>
              <Idx>5</Idx><Td>3</Td><Td>3.85</Td><Td>3.85</Td><Td /><Td>(250)</Td><Td>(250)</Td><Td /><Td>(7500)</Td><Td>(250*650)</Td><Td>(125)</Td>
            </tr>
            <tr>
              <Idx>6</Idx><Td>4</Td><Td>3.85</Td><Td>3.85</Td><Td /><Td>(250)</Td><Td>(200)</Td><Td>(300)</Td><Td>(6950)</Td><Td>(250*650)</Td><Td>(125)</Td>
            </tr>
          </tbody>
        </Table>
      </TableWrap>
      <DlgFill><Strip /></DlgFill>
      <DlgScroll><DlgThumb /></DlgScroll>
    </Dialog>
    <Marks viewBox="0 0 1087 903">
      <g fill="none" stroke="#f01414" strokeWidth="2.500" strokeLinecap="round" strokeLinejoin="round">
        <path d="M173 621C177 612 195 606 212 607C236 610 262 620 268 633C271 645 258 655 240 660C222 663 200 664 188 655C176 648 166 640 169 630C171 622 176 618 181 612" />
        <path d="M288 600 283 620" />
        <path d="M285 637 296 640 291 647 305 653 288 657" />
        <path d="M975.500 366C976 385 974 405 971 416" />
        <path d="M831 585 852 582C853 590 838 596 828 603L848 606" />
        <path d="M953 708 972 710 950 727 975 731C978 738 970 742 963 742" />
      </g>
      <g fill="#f8200f">
        <polygon points="727,412 705,461 622,613 627,616 613,626 612,608 617,605 698,459" />
        <polygon points="1017,416 930,450 927,446 917,462 934,466 932,460" />
        <polygon points="827,631 880,598 875,593 893,594 885,607 884,602" />
        <polygon points="1019,814 946,750 951,746 934,742 938,757 942,755" />
      </g>
    </Marks>
  </Page>
);

export default App;
